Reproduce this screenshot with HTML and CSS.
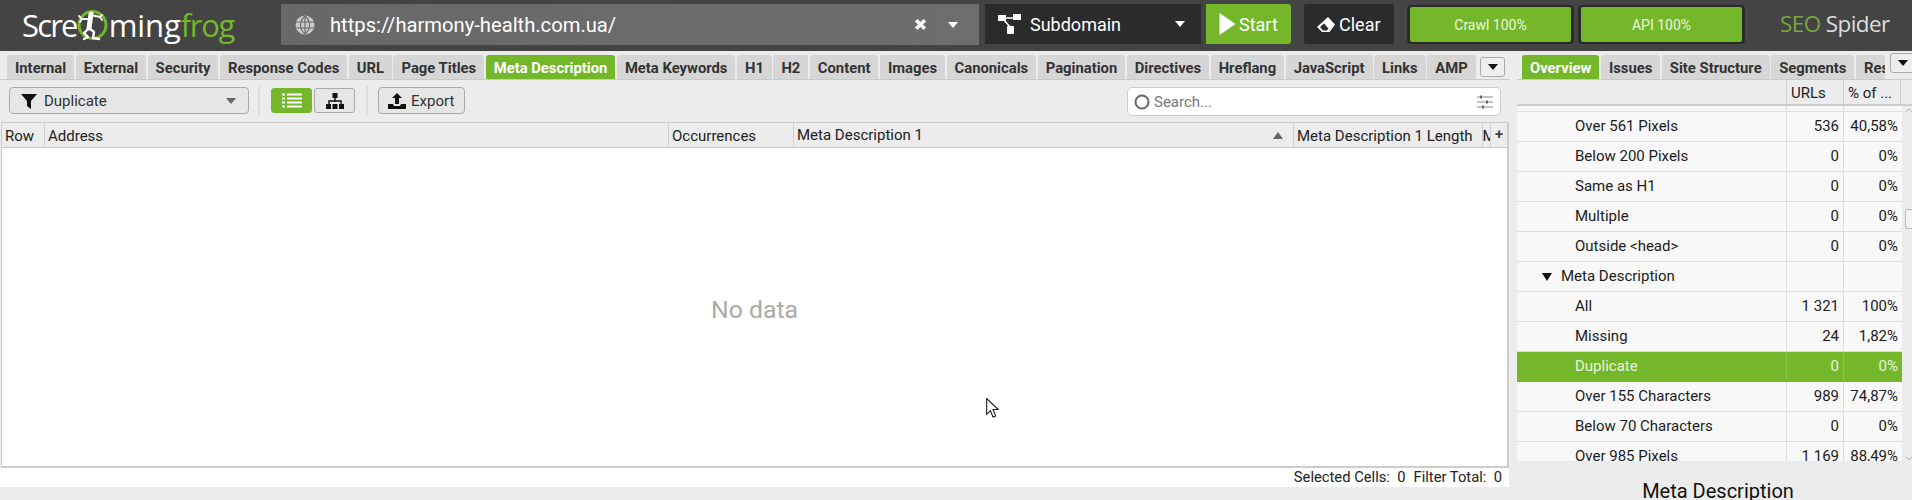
FILE: index.html
```html
<!DOCTYPE html>
<html lang="en">
<head>
<meta charset="utf-8">
<title>Screaming Frog SEO Spider</title>
<link rel="stylesheet" href="styles.css">
</head>
<body>
<header class="topbar">
  <div class="logo">
    <span>Scre</span>
    <svg class="logo-frog" viewBox="0 0 34 34" width="34" height="34">
      <circle cx="16.500" cy="17" r="13.500" fill="none" stroke="#74b72b" stroke-width="3"/>
      <g fill="none" stroke="#fff" stroke-linecap="round" stroke-linejoin="round">
        <path d="M15 7l9 2 2-2M24 9l2 3M13 11H6L3 8M6 11l-2 3" stroke-width="1.800"/>
        <path d="M15 6l-2 14" stroke-width="5"/>
        <path d="M13 20l5 4-1 6 6 1M13 20l-5 5 4 4-4 2" stroke-width="2.400"/>
      </g>
    </svg>
    <span class="logo-ming">ming</span><span class="logo-green">frog</span>
  </div>
  <div class="urlbox">
    <svg class="globe" viewBox="0 0 20 20" width="20" height="20">
      <circle cx="10" cy="10" r="9.500" fill="#c9c9c9"/>
      <path d="M1 7h18M1 13h18M10 1v18M10 1c-6 5-6 13 0 18M10 1c6 5 6 13 0 18" stroke="#6a6a6a" stroke-width="1.100" fill="none"/>
    </svg>
    <span class="url">https://harmony-health.com.ua/</span>
    <svg class="url-x" viewBox="0 0 12 12" width="13" height="13"><path d="M2 2l8 8M10 2l-8 8" stroke="#fff" stroke-width="3.200"/></svg>
    <span class="caret"></span>
  </div>
  <div class="scope">
    <svg viewBox="0 0 24 20" width="24" height="20"><path d="M4 4h16M5 5l8 9" stroke="#fff" stroke-width="1.600"/><rect x="0" y="1" width="8" height="6" fill="#fff"/><rect x="15" y="0" width="8" height="6" fill="#fff"/><rect x="9" y="12" width="7" height="8" rx="1" fill="#fff"/></svg>
    <span class="scope-label">Subdomain</span>
    <span class="caret"></span>
  </div>
  <div class="start">
    <svg viewBox="0 0 16 22" width="17" height="22"><path d="M0 0l16 11L0 22z" fill="#fff"/></svg>
    <span>Start</span>
  </div>
  <div class="clear">
    <svg viewBox="0 0 18 15" width="18" height="15"><path d="M11 0l7 7.500-5.500 7.500H5L0 10z" fill="#fff"/><path d="M3 10l4-3.500 4.500 5-1.500 2H6z" fill="#2b2b2b"/></svg>
    <span>Clear</span>
  </div>
  <div class="progress"><div class="progress-fill">Crawl 100%</div></div>
  <div class="progress"><div class="progress-fill">API 100%</div></div>
  <div class="brand"><span class="brand-seo">SEO</span> Spider</div>
</header>

<div class="workspace">
  <main class="left">
    <nav class="tabs">
      <span class="tab">Internal</span><span class="tab">External</span><span class="tab">Security</span><span class="tab">Response Codes</span><span class="tab">URL</span><span class="tab">Page Titles</span><span class="tab active">Meta Description</span><span class="tab">Meta Keywords</span><span class="tab">H1</span><span class="tab">H2</span><span class="tab">Content</span><span class="tab">Images</span><span class="tab">Canonicals</span><span class="tab">Pagination</span><span class="tab">Directives</span><span class="tab">Hreflang</span><span class="tab">JavaScript</span><span class="tab">Links</span><span class="tab">AMP</span>
      <span class="tab-more"><i class="caret-dark"></i></span>
    </nav>
    <div class="toolbar">
      <div class="combo">
        <svg viewBox="0 0 16 16" width="16" height="16"><path d="M0 1h16l-6 7v8l-4-3V8z" fill="#111"/></svg>
        <span class="combo-label">Duplicate</span>
        <span class="caret-grey"></span>
      </div>
      <span class="sep"></span>
      <div class="viewbtns">
        <span class="viewbtn on">
          <svg viewBox="0 0 20 15" width="20" height="15"><path d="M0 1.500h3M5 1.500h15M0 5.500h3M5 5.500h15M0 9.500h3M5 9.500h15M0 13.500h3M5 13.500h15" stroke="#fff" stroke-width="2.200"/></svg>
        </span>
        <span class="viewbtn">
          <svg viewBox="0 0 18 16" width="18" height="16"><path d="M9 4v5M3 12V8h12v4" stroke="#111" stroke-width="1.400" fill="none"/><rect x="6.500" y="0" width="5" height="5" fill="#111"/><rect x="0" y="11" width="5" height="5" fill="#111"/><rect x="6.500" y="11" width="5" height="5" fill="#111"/><rect x="13" y="11" width="5" height="5" fill="#111"/></svg>
        </span>
      </div>
      <span class="sep sep-b"></span>
      <div class="export">
        <svg viewBox="0 0 18 16" width="18" height="16"><path d="M9 0l5 5h-3v6H7V5H4z" fill="#111"/><path d="M0 11h5l1 2h6l1-2h5v5H0z" fill="#111"/></svg>
        <span>Export</span>
      </div>
      <div class="search">
        <svg viewBox="0 0 16 16" width="16" height="16"><circle cx="8" cy="8" r="6.500" fill="none" stroke="#666" stroke-width="2"/></svg>
        <span class="search-text">Search...</span>
        <svg viewBox="0 0 16 14" width="16" height="14"><path d="M0 2h16M0 7h16M0 12h16" stroke="#888" stroke-width="1"/><path d="M4 .5v3M10 5.500v3M6 10.500v3" stroke="#666" stroke-width="2"/></svg>
      </div>
    </div>
    <div class="table">
      <div class="thead">
        <span class="th">Row</span>
        <span class="th">Address</span>
        <span class="th">Occurrences</span>
        <span class="th th-sort">Meta Description 1<i class="sort"></i></span>
        <span class="th">Meta Description 1 Length</span>
        <span class="th th-clip">M</span>
        <span class="th th-plus">+</span>
      </div>
      <div class="tbody">
        <span class="nodata">No data</span>
        <svg class="cursor" viewBox="0 0 12 19" width="13" height="20"><path d="M.5.500v15l3.500-3.500 2.500 6 2.500-1-2.500-6h5z" fill="#fff" stroke="#111" stroke-width="1"/></svg>
      </div>
    </div>
    <div class="status"><span>Selected Cells:&nbsp; 0</span><span>Filter Total:&nbsp; 0</span></div>
  </main>

  <aside class="right">
    <nav class="tabs rtabs">
      <span class="tab active">Overview</span><span class="tab">Issues</span><span class="tab">Site Structure</span><span class="tab">Segments</span><span class="tab tab-clip">Res</span>
      <span class="tab-more rmore"><i class="caret-dark"></i></span>
    </nav>
    <div class="rhead">
      <span></span><span class="rh">URLs</span><span class="rh">% of ...</span>
    </div>
    <div class="rbody">
      <div class="rows">
        <div class="row sliver"><span></span><span></span><span></span></div>
        <div class="row"><span class="name">Over 561 Pixels</span><span class="num">536</span><span class="num">40,58%</span></div>
        <div class="row"><span class="name">Below 200 Pixels</span><span class="num">0</span><span class="num">0%</span></div>
        <div class="row"><span class="name">Same as H1</span><span class="num">0</span><span class="num">0%</span></div>
        <div class="row"><span class="name">Multiple</span><span class="num">0</span><span class="num">0%</span></div>
        <div class="row"><span class="name">Outside &lt;head&gt;</span><span class="num">0</span><span class="num">0%</span></div>
        <div class="row"><span class="name group"><i class="tri"></i>Meta Description</span><span class="num"></span><span class="num"></span></div>
        <div class="row"><span class="name">All</span><span class="num">1 321</span><span class="num">100%</span></div>
        <div class="row"><span class="name">Missing</span><span class="num">24</span><span class="num">1,82%</span></div>
        <div class="row sel"><span class="name">Duplicate</span><span class="num">0</span><span class="num">0%</span></div>
        <div class="row"><span class="name">Over 155 Characters</span><span class="num">989</span><span class="num">74,87%</span></div>
        <div class="row"><span class="name">Below 70 Characters</span><span class="num">0</span><span class="num">0%</span></div>
        <div class="row last"><span class="name">Over 985 Pixels</span><span class="num">1 169</span><span class="num">88,49%</span></div>
      </div>
      <div class="scrollbar">
        <svg viewBox="0 0 8 5" width="8" height="5"><path d="M.5 4.500L4 1l3.500 3.500" fill="none" stroke="#aaa"/></svg>
        <span class="thumb"></span>
        <svg viewBox="0 0 8 5" width="8" height="5"><path d="M.5.500L4 4l3.500-3.500" fill="none" stroke="#aaa"/></svg>
      </div>
    </div>
    <div class="rtitle">Meta Description</div>
  </aside>
</div>
</body>
</html>
```

FILE: styles.css
```css
* { box-sizing: border-box; }
html, body { margin: 0; height: 500px; overflow: hidden; }
body { background: #ececec; font-family: Roboto, "Liberation Sans", sans-serif; color: #222; }
i { display: block; font-style: normal; }

.topbar { height: 51px; background: #444; display: flex; align-items: flex-start; padding-top: 4px; color: #fff; }
.logo { width: 281px; height: 41px; padding-left: 22px; display: flex; align-items: center; font-family: "Open Sans", sans-serif; font-size: 31px; letter-spacing: -1.800px; color: #fff; }
.logo-frog { margin: 0 -1px; flex: none; }
.logo-ming { letter-spacing: -.1px; }
.logo-green { color: #74b72b; letter-spacing: -1.300px; }
.urlbox { width: 698px; height: 41px; background: linear-gradient(90deg, #686868, #6e6e6e); display: flex; align-items: center; padding: 0 21px 0 14px; }
.globe { flex: none; }
.url { font-size: 20.200px; margin-left: 15px; flex: 1; }
.url-x { margin-right: 21px; }
.caret { width: 0; height: 0; border-left: 5.500px solid transparent; border-right: 5.500px solid transparent; border-top: 6px solid #fff; display: block; flex: none; }
.scope { width: 216px; height: 40px; margin-left: 6px; background: #2b2b2b; display: flex; align-items: center; padding: 0 16px 0 13px; }
.scope-label { font-size: 18px; margin-left: 8px; flex: 1; }
.start { width: 85px; height: 40px; margin-left: 5px; background: #74b72b; border-radius: 0 3px 3px 0; display: flex; align-items: center; padding-left: 13px; gap: 3px; font-size: 18px; }
.clear { width: 90px; height: 40px; margin-left: 13px; background: #2b2b2b; border-radius: 3px; display: flex; align-items: center; padding-left: 13px; gap: 4px; font-size: 18px; }
.progress { width: 167px; height: 39px; margin: 1px 0 0 4px; background: #2b2b2b; border-radius: 4px; padding: 2px 3px; }
.clear + .progress { margin-left: 13px; }
.progress-fill { height: 35px; background: #74b72b; border-radius: 2px; display: flex; align-items: center; justify-content: center; font-size: 14px; color: #eaf5dc; }
.brand { margin-left: 35px; font-family: "Open Sans", sans-serif; font-size: 22.500px; line-height: 40px; color: #ddd; letter-spacing: -.6px; }
.brand-seo { color: #74a83a; }

.workspace { display: flex; height: 449px; }
.left { width: 1509px; flex: none; }
.right { flex: 1; margin-left: 8px; min-width: 0; }

.tabs { height: 29px; padding: 4px 0 0 7px; display: flex; gap: 1.500px; border-bottom: 1px solid #c9c9c9; }
.tab { height: 24px; background: #d6d6d6; border-radius: 3px 3px 0 0; padding: 0 8px; font-size: 14.800px; font-weight: 700; color: #333; line-height: 26px; white-space: nowrap; }
.tab.active { background: #74b72b; color: #fff; }
.tab-more { width: 25px; height: 20px; margin: 2px 0 0 3px; border: 1px solid #aaa; border-radius: 3px; background: #eee; display: flex; align-items: center; justify-content: center; }
.caret-dark { width: 0; height: 0; border-left: 5px solid transparent; border-right: 5px solid transparent; border-top: 6px solid #111; }

.toolbar { height: 42px; display: flex; align-items: flex-start; padding: 7px 8px 0 9px; }
.combo { width: 240px; height: 27px; border: 1px solid #aaa; border-radius: 4px; background: #e6e6e6; display: flex; align-items: center; padding: 0 12px 0 11px; font-size: 15px; color: #333; }
.combo-label { flex: 1; margin-left: 7px; }
.caret-grey { width: 0; height: 0; border-left: 5px solid transparent; border-right: 5px solid transparent; border-top: 6px solid #666; }
.sep { width: 2px; height: 30px; margin: -1px 11px 0 9px; background: #ddd; }
.sep-b { margin: -1px 10px 0 11px; }
.viewbtns { display: flex; gap: 2px; margin-top: 1px; }
.viewbtn { width: 41px; height: 25px; border: 1px solid #aaa; border-radius: 3px; display: flex; align-items: center; justify-content: center; background: #e6e6e6; }
.viewbtn.on { background: #74b72b; border-color: #74b72b; }
.export { width: 87px; height: 27px; border: 1px solid #aaa; border-radius: 4px; background: #e6e6e6; display: flex; align-items: center; padding-left: 9px; gap: 5px; font-size: 15px; color: #333; }
.search { width: 374px; height: 29px; margin-left: auto; border: 1px solid #ccc; border-radius: 5px; background: #fff; display: flex; align-items: center; padding: 0 7px 0 6px; font-size: 15px; color: #777; }
.search-text { flex: 1; margin-left: 4px; }

.table { margin-left: 1px; height: 346px; display: flex; flex-direction: column; border-bottom: 2px solid #ccc; border-top: 1px solid #ccc; border-right: 2px solid #ccc; }
.thead { height: 25px; flex: none; display: grid; grid-template-columns: 43px 624px 125px 500px 188.500px 8.500px 1fr; border-bottom: 1px solid #ccc; border-left: 1px solid #ccc; background: #ececec; }
.th { font-size: 15px; line-height: 26px; padding-left: 3px; border-right: 1px solid #d0d0d0; color: #222; white-space: nowrap; overflow: hidden; }
.th-sort { display: flex; align-items: center; justify-content: space-between; padding-right: 10px; }
.th-clip { padding-left: 0; }
.th-plus { border-right: 0; font-weight: 700; padding: 0; text-align: center; color: #444; line-height: 22px; }
.sort { width: 0; height: 0; border-left: 5px solid transparent; border-right: 5px solid transparent; border-bottom: 7px solid #666; }
.tbody { flex: 1; background: #fff; position: relative; display: flex; align-items: center; justify-content: center; padding-top: 4px; border-left: 1px solid #ccc; }
.nodata { font-size: 24.800px; color: #aaa; }
.cursor { position: absolute; left: 984px; top: 250px; }
.status { height: 19px; background: #fff; display: flex; justify-content: flex-end; gap: 8px; padding-right: 7px; font-size: 14.750px; line-height: 19px; color: #222; }

.rtabs { padding-left: 5px; position: relative; overflow: hidden; }
.tab-clip { width: 29px; padding-right: 0; overflow: hidden; flex: none; }
.rmore { position: absolute; right: -3px; top: 2px; margin: 0; width: 25px; }
.rhead { height: 26px; display: grid; grid-template-columns: 269px 57px 58px 11px; background: #ececec; border-bottom: 2px solid #ccc; font-size: 15px; }
.rh { line-height: 26px; padding-left: 4px; border-left: 1px solid #d0d0d0; }
.rh:last-child { border-right: 1px solid #d0d0d0; }
.rbody { height: 355px; display: flex; overflow: hidden; }
.rows { width: 385px; flex: none; }
.row { height: 30px; display: grid; grid-template-columns: 269px 57px 59px; background: #f8f8f8; border-bottom: 1.500px solid #ddd; font-size: 15px; line-height: 28.500px; color: #1c1c1c; }
.row.sliver { height: 6px; }
.row > span:first-child { border-right-width: 0; }
.row > span + span { border-left: 1px solid #ddd; border-right: 0; }
.name { padding-left: 58px; white-space: nowrap; }
.name.group { padding-left: 43px; display: flex; align-items: center; }
.tri { width: 0; height: 0; border-left: 5px solid transparent; border-right: 5px solid transparent; border-top: 8px solid #111; margin: 0 9px 0 -18px; }
.num { text-align: right; padding-right: 4px; white-space: nowrap; }
.row.sel { background: #74b72b; color: #eaf5dc; border-bottom-color: #74b72b; }
.row.sel > span + span { border-left-color: #8cc44f; }
.scrollbar { flex: 1; display: flex; flex-direction: column; align-items: center; padding: 2px 0 0 3px; background: #ececec; }
.thumb { width: 100%; height: 21px; margin: 96px 0 227px; border: 1px solid #bbb; border-right: 0; border-radius: 3px 0 0 3px; background: #f4f4f4; }
.rtitle { font-size: 20px; text-align: center; width: 402px; color: #111; padding-top: 18px; }
```
